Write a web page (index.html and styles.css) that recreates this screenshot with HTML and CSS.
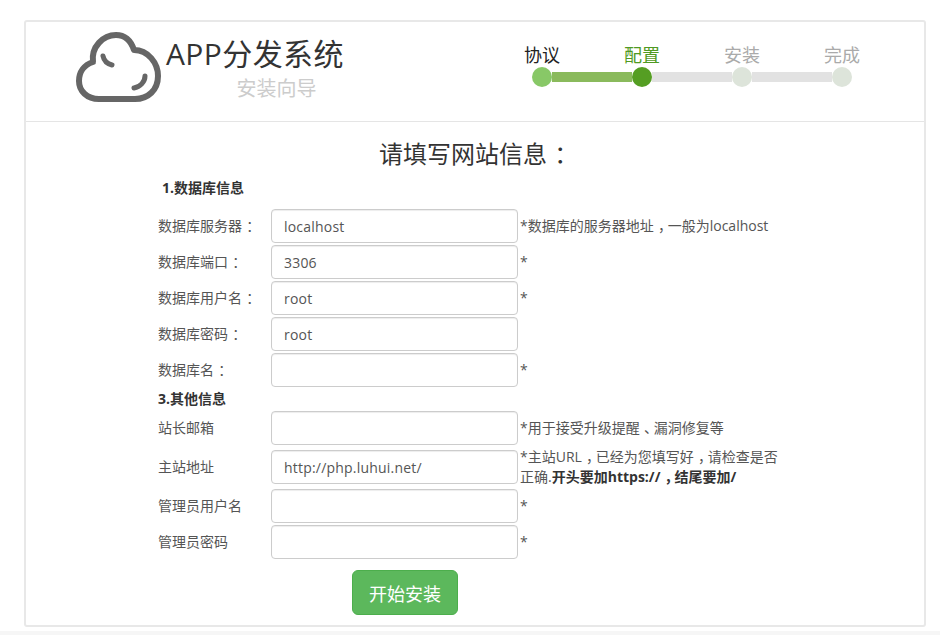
FILE: index.html
```html
<!DOCTYPE html>
<html lang="zh-CN">
<head>
<meta charset="utf-8">
<title>APP分发系统 安装向导</title>
<link rel="stylesheet" href="styles.css">
</head>
<body>
<div class="card">
  <header class="head">
    <svg class="logo" width="88" height="74" viewBox="0 0 88 74" fill="none" stroke="#666" stroke-linecap="round" stroke-linejoin="round">
      <path stroke-width="6" d="M60 68H24C12 68 4 60 4 50C4 41 9 34 18 31C16 16 28 4 41 4C50 4 56 10 59 19C73 19 83 32 83 45C83 59 73 68 60 68Z"/>
      <path stroke-width="5" d="M28 25C29 30 33 33 37 34"/>
      <path stroke-width="5" d="M70 45C70 51 65 56 59 57"/>
    </svg>
    <div class="brand">
      <div class="brand-title">APP分发系统</div>
      <div class="brand-sub">安装向导</div>
    </div>
    <div class="steps">
      <div class="step-labels">
        <span class="lab done">协议</span>
        <span class="lab cur">配置</span>
        <span class="lab">安装</span>
        <span class="lab">完成</span>
      </div>
      <div class="track">
        <i class="dot dot-done"></i><i class="seg seg-done"></i>
        <i class="dot dot-cur"></i><i class="seg"></i>
        <i class="dot"></i><i class="seg"></i>
        <i class="dot"></i>
      </div>
    </div>
  </header>
  <main class="body">
    <h1 class="title">请填写网站信息<span class="fw">：</span></h1>
    <form class="form">
      <h2 class="sec sec-first">1.数据库信息</h2>
      <div class="row"><label class="lbl">数据库服务器<span class="fw">：</span></label><input class="inp" value="localhost"><span class="note">*数据库的服务器地址<span class="fw">，</span>一般为localhost</span></div>
      <div class="row"><label class="lbl">数据库端口<span class="fw">：</span></label><input class="inp" value="3306"><span class="note">*</span></div>
      <div class="row"><label class="lbl">数据库用户名<span class="fw">：</span></label><input class="inp" value="root"><span class="note">*</span></div>
      <div class="row"><label class="lbl">数据库密码<span class="fw">：</span></label><input class="inp" value="root"><span class="note"></span></div>
      <div class="row"><label class="lbl">数据库名<span class="fw">：</span></label><input class="inp"><span class="note">*</span></div>
      <h2 class="sec sec-other">3.其他信息</h2>
      <div class="row"><label class="lbl">站长邮箱</label><input class="inp"><span class="note">*用于接受升级提醒<span class="fw">、</span>漏洞修复等</span></div>
      <div class="row"><label class="lbl">主站地址</label><input class="inp" value="http://php.luhui.net/"><span class="note">*主站URL<span class="fw">，</span>已经为您填写好<span class="fw">，</span>请检查是否正确.<b>开头要加https://<span class="fw">，</span>结尾要加/</b></span></div>
      <div class="row"><label class="lbl">管理员用户名</label><input class="inp"><span class="note">*</span></div>
      <div class="row"><label class="lbl">管理员密码</label><input class="inp"><span class="note">*</span></div>
      <div class="actions"><button class="btn" type="button">开始安装</button></div>
    </form>
  </main>
</div>
<div class="band"></div>
</body>
</html>
```
FILE: styles.css
```css
* { box-sizing: border-box; }
html, body { margin: 0; padding: 0; }
body {
  background: #fff;
  color: #333;
  font-family: "Open Sans", "Noto Sans CJK SC", sans-serif;
  font-size: 14px;
  height: 635px;
  overflow: hidden;
}
.card {
  width: 902px;
  height: 607px;
  margin: 20px 0 4px 24px;
  border: 2px solid #e8e8e8;
  border-radius: 3px;
}
.band { height: 4px; background: #f6f6f6; }
.head {
  display: flex;
  height: 100px;
  border-bottom: 1px solid #e5e5e5;
  padding: 9px 0 0 49px;
}
.logo { flex: none; }
.brand { width: 180px; margin-left: 3px; }
.brand-title { font-size: 30px; line-height: 46px; letter-spacing: .4px; color: #333; white-space: nowrap; }
.brand-sub { font-size: 20px; line-height: 28px; color: #ccc; margin: -2px 0 0 70.5px; white-space: nowrap; }
.steps { margin: 10px 0 0 146px; width: 400px; }
.step-labels { display: flex; }
.lab { width: 100px; height: 26px; padding-top: 1px; text-align: center; font-size: 18px; line-height: 26px; color: #aaa; }
.lab.done { color: #222; }
.lab.cur { color: #4f9a22; }
.track { display: flex; align-items: center; margin: 0 0 0 40px; height: 20px; }
.dot { width: 20px; height: 20px; border-radius: 50%; background: #dde4da; flex: none; }
.dot-done { background: #88c867; }
.dot-cur { background: #559e23; }
.seg { width: 80px; height: 10px; background: #e2e2e2; flex: none; }
.seg-done { background: #8aba5c; }
.body { padding: 0; }
.title { margin: 0; padding-top: 14px; font-size: 24px; font-weight: 400; line-height: 36px; text-align: center; color: #333; }
.fw { font-feature-settings: "halt"; padding: 0 .2em 0 .3em; }
.form { padding-left: 132px; }
.sec { margin: 0; font-size: 14px; font-weight: 700; line-height: 20px; color: #333; }
.sec-first { padding: 6px 0 11px 4px; height: 37px; }
.sec-other { margin-bottom: 2px; }
.row { display: flex; align-items: center; min-height: 34px; margin-bottom: 2px; }
.lbl { width: 113px; flex: none; padding-bottom: 2px; font-size: 14px; color: #555; }
.inp {
  width: 247px;
  height: 34px;
  flex: none;
  border: 1px solid #ccc;
  border-radius: 4px;
  padding: 0 12px;
  font: inherit;
  letter-spacing: .2px;
  color: #555;
  box-shadow: inset 0 1px 1px rgba(0,0,0,.075);
}
.note { width: 262px; margin-left: 2px; line-height: 20px; color: #555; }
.note b { color: #333; }
.actions { padding: 9px 0 0 194px; }
.btn {
  width: 106px;
  height: 45px;
  border: 1px solid #4cae4c;
  border-radius: 6px;
  background: #5cb85c;
  color: #fff;
  font: inherit;
  font-size: 18px;
  padding: 0;
}
```
